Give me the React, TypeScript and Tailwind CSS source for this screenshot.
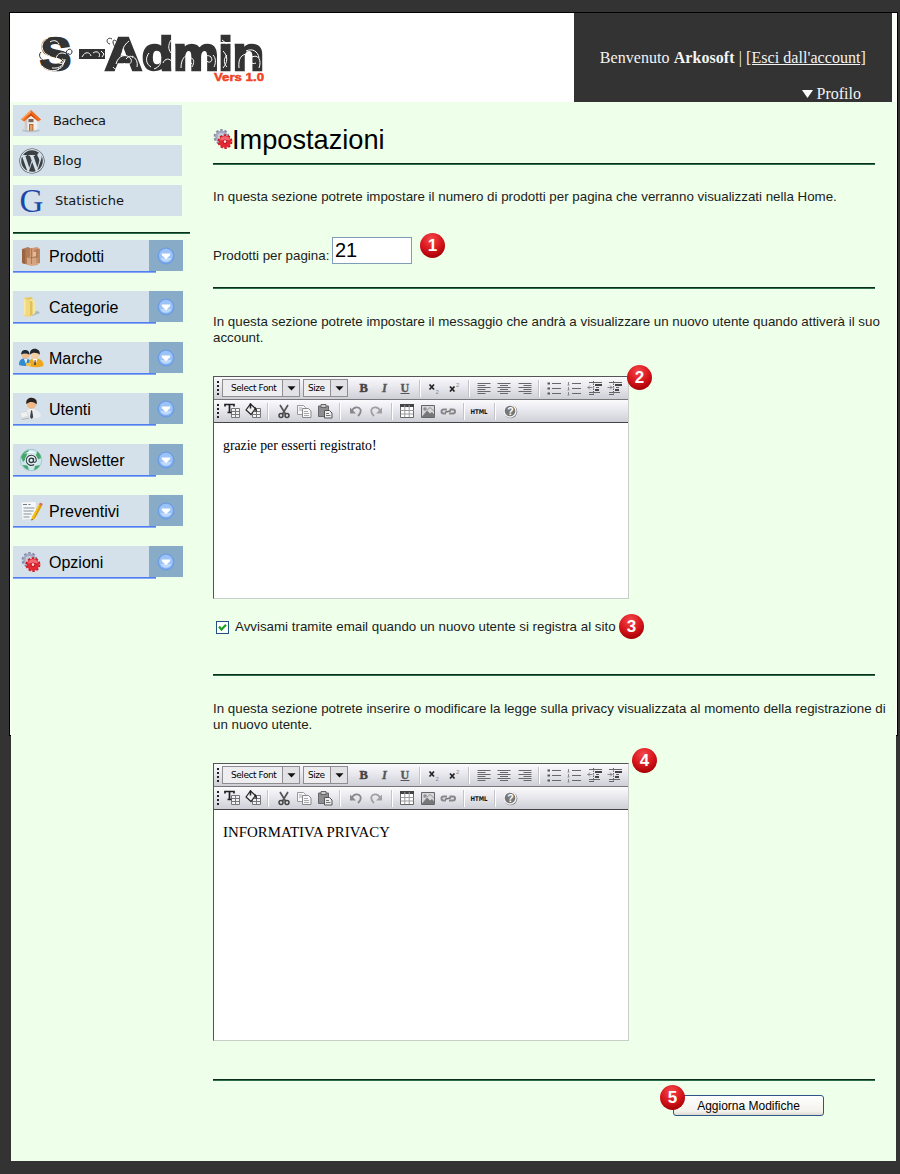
import type { ReactNode } from "react";
import { FaWordpress } from "react-icons/fa";

const SANS = "font-['Liberation_Sans',Arial,sans-serif]";
const SERIF = "font-['Liberation_Serif','Times_New_Roman',serif]";
const VERDANA = "font-['DejaVu_Sans',Verdana,sans-serif]";

function Gear({ size = 20 }: { size?: number }) {
  return (
    <svg width={size} height={size} viewBox="0 0 20 20" className="shrink-0">
      <circle cx="8.5" cy="8" r="6.4" fill="none" stroke="#858aa5" strokeWidth="3" strokeDasharray="2.35 1.67" />
      <circle cx="8.5" cy="8" r="5.2" fill="#c9ccda" stroke="#a3a8c0" strokeWidth="2.4" />
      <circle cx="12" cy="12.6" r="6.3" fill="none" stroke="#c81a24" strokeWidth="2.2" strokeDasharray="2.3 1.66" />
      <circle cx="12" cy="12.6" r="6.1" fill="#e22832" />
      <path d="M6.800 11.300a5.400 5.400 0 0 1 10.400-.3q-5 .1-10.400.3z" fill="#f2676f" />
      <circle cx="12" cy="12.600" r="2.200" fill="#b8141c" />
      <circle cx="12" cy="12.600" r="1.300" fill="#f5e3e6" />
    </svg>
  );
}

function HomeIcon() {
  return (
    <svg width="22" height="24" viewBox="0 0 22 24">
      <ellipse cx="11" cy="21.5" rx="9" ry="1.8" fill="#b9c3cb" />
      <path d="M4.5 10v10.5l7 1.5 6-1.5V10L11 5z" fill="#f1efee" />
      <path d="M4.5 11v9.5l3 .8V10z" fill="#cfc9c6" />
      <path d="M11 1 .8 10.4l3.6 2L11 6.6l6.8 5.8 3.4-1.6z" fill="#ee6a1e" />
      <path d="M11 1 .8 10.4l1.6.7L11 3.2z" fill="#f9a25d" />
      <path d="M11 4.5l-6 6 6-3.8 6 4.4z" fill="#c9480b" />
      <rect x="8.5" y="10" width="5" height="3.2" fill="#7d6257" />
      <rect x="9" y="15" width="4.4" height="6.8" fill="#b36b35" />
      <rect x="10" y="16" width="2.4" height="5.6" fill="#e0a268" />
    </svg>
  );
}

function BoxIcon() {
  return (
    <svg width="20" height="20" viewBox="0 0 20 20">
      <path d="M1 3l6-2 3 1.5V18l-3 .8L1 17z" fill="#b27a55" />
      <path d="M1 3l3 .8V18l-3-1z" fill="#9a6443" />
      <path d="M9 2.5L16 1l3 2v14l-6 1.5-4-1z" fill="#cf9a74" />
      <path d="M13 3.5l6-.5v14l-6 1.5z" fill="#bd855f" />
      <path d="M6 11l6-1 5 .8V19l-7 1-4-1.6z" fill="#d6a480" />
      <path d="M10.5 2.4V18M4 3.8v13M16 3v14M6 11l5 .8 6-1" stroke="#9a6a4a" strokeWidth=".7" fill="none" />
      <path d="M12 6h3v4h-3z" fill="#e2bb9c" />
    </svg>
  );
}

function FolderIcon() {
  return (
    <svg width="20" height="22" viewBox="0 0 20 22">
      <path d="M11 20l8-3-2-2-6 1z" fill="#aab6bf" />
      <path d="M3 2l7-1 1.500 1v17L6 21l-3-2z" fill="#e5c762" />
      <path d="M8.500 3L13.500 4l.8 13-3 2.500z" fill="#f5e6a0" />
      <path d="M3 2l6 2.500V20.500L6 21l-3-2z" fill="#f3d97d" />
      <path d="M9 4.500l2.500 1.200v13L9 20.500z" fill="#e0c05c" />
      <path d="M3.800 3.500v15" stroke="#fbf0bd" strokeWidth="1" />
    </svg>
  );
}

function PeopleIcon() {
  return (
    <svg width="26" height="20" viewBox="0 0 26 20">
      <path d="M1 17c0-5 2-6.500 6-6.500s6 2 6 6.500q-6 2-12 0z" fill="#2f8bd3" />
      <circle cx="7.500" cy="7" r="3.800" fill="#eebd93" />
      <path d="M3.200 6.500C3 2.500 6 1.500 8 2s4 2 3.400 4.800C9 5.500 6 5 3.200 6.500z" fill="#1e2b38" />
      <path d="M6 11l2 5 1.500-5z" fill="#e9f3fb" />
      <path d="M10.500 18c0-6 2-7.500 7-7.500s8 2 8 7.500q-7 2.400-15 0z" fill="#eda81f" />
      <circle cx="16.800" cy="6.800" r="4.400" fill="#f6cfa5" />
      <path d="M12 6.500C11.500 2 14.500.6 17 .7s5.500 2 4.700 6C19 4.500 15 4 12 6.500z" fill="#25272b" />
      <path d="M14.500 11l3 5.500 2-5.500z" fill="#fff" />
      <path d="M16.700 12l-.8 5h2.200l-.6-5z" fill="#564a3a" />
      <rect x="8" y="15" width="5" height="3" rx="1" fill="#f4c24a" />
    </svg>
  );
}

function UserIcon() {
  return (
    <svg width="26" height="23" viewBox="0 0 26 23">
      <path d="M7 21c0-7 2-9 6.500-9s9 3 9.500 7.500q-6 3-16 1.500z" fill="#e9edf1" />
      <path d="M12 12l1.600 9 2-9z" fill="#fff" />
      <path d="M13 13.200l-1 7 1.700 1.800 1.500-1.800-1-7z" fill="#3e444c" />
      <circle cx="13.500" cy="7.200" r="4.700" fill="#efb98a" />
      <path d="M8.300 7C7.500 2.500 11 .7 13.800.8s6 2.200 4.800 6.600C16.500 4.500 12 4 8.300 7z" fill="#2a2321" />
      <path d="M1 15l8-1.500L11 20l-8 2.400z" fill="#d6d9db" />
      <path d="M2.400 16l6-1 1.300 4-6 1.600z" fill="#eef1f3" />
      <path d="M3 22.500l8-2 .8 1L4 23z" fill="#aeb4b9" />
    </svg>
  );
}

function NewsletterIcon() {
  return (
    <svg width="24" height="24" viewBox="0 0 24 24">
      <circle cx="12" cy="12" r="10.800" fill="#c9e7ec" stroke="#9dbfc9" strokeWidth=".8" />
      <path d="M2 9c2-4.500 5-6.500 8-7l-2 4-1 5-3 3zM22 10c0-3-2-5.500-4-6.500l-1 4 2 4zM3.500 17l5 .5 1.500 4.500c-3-.7-5-2.500-6.500-5zM16 18l5-1c-1.500 3-3.500 4.500-6 5.200z" fill="#46a76a" />
      <circle cx="12.300" cy="12.300" r="6.400" fill="#e8f0f1" />
      <circle cx="12.300" cy="12.300" r="2.200" fill="none" stroke="#2c3e44" strokeWidth="1.300" />
      <path d="M14.500 10v3.200c0 1.800 2.800 1.500 2.800-1 0-2.900-2.200-5-5-5a5.100 5.100 0 1 0 2.900 9.300" fill="none" stroke="#2c3e44" strokeWidth="1.100" />
      <path d="M5 6q6-5 13-.5-6-1.600-13 .5z" fill="#fff" opacity=".9" />
    </svg>
  );
}

function NoteIcon() {
  return (
    <svg width="24" height="22" viewBox="0 0 24 22">
      <path d="M2 2l15-.5L18 19 3 20z" fill="#f5f7f8" stroke="#d0d7dc" strokeWidth=".6" />
      <path d="M4 4.500h4M9.500 4.500h2" stroke="#6d7c86" strokeWidth="1.200" />
      <path d="M4.500 8h11M4.500 11h10M4.500 14h8M4.500 17h6" stroke="#87939b" strokeWidth="1.200" />
      <path d="M19.800 4.500l3 1.500-7 12.800-3.300 1.800.3-3.600z" fill="#f2c11d" />
      <path d="M21 5l1.800 1-7 12.800-1.500.6z" fill="#d99c12" />
      <path d="M19.800 4.500l1.200-1.700q2.500 0 2.700 1.600l-.9 1.600z" fill="#e06a4d" />
      <path d="M12.500 20.600l.2-1.800 1.300.9z" fill="#333" />
    </svg>
  );
}

function NavTop({ icon, label, pad, text = "" }: { icon: ReactNode; label: string; pad: string; text?: string }) {
  return (
    <a className={`flex h-[31px] w-[169px] items-center bg-[#d5e1ea] ${VERDANA} text-[13px] text-[#151515]`}>
      <span className={`flex shrink-0 items-center justify-center ${pad}`}>{icon}</span>
      <span className={text}>{label}</span>
    </a>
  );
}

function NavItem({ icon, label }: { icon: ReactNode; label: string }) {
  return (
    <div className="h-[51px]">
      <div className="flex h-[31px] w-[170px]">
        <a className={`flex w-[136px] items-center bg-[#d5e1ea] ${SANS} text-[16px] text-black`}>
          <span className="flex w-[36px] shrink-0 items-center justify-center">{icon}</span>
          <span className="pt-[2px]">{label}</span>
        </a>
        <button className="flex flex-1 items-center justify-center bg-[#88abc8]">
          <svg width="18" height="18" viewBox="0 0 18 18">
            <circle cx="9" cy="9" r="8" fill="#7baaf0" stroke="#6a9ae0" strokeWidth="1" />
            <circle cx="9" cy="8.500" r="6.800" fill="#9cc3f7" />
            <path d="M3.500 11a6 6 0 0 0 11 0z" fill="#bddafb" />
            <path d="M4.600 6.500h8.800l-.6 2L9 12.300 5.200 8.500z" fill="#fff" />
          </svg>
        </button>
      </div>
      <div className="h-[2px] w-[143px] border-b border-[#87a6f3] bg-[#4f7ff0]" />
    </div>
  );
}

function Rule() {
  return <div className="h-[2px] w-[662px] shrink-0 border-b border-[#2c6e4c] bg-[#0c2f1b]" />;
}

function Badge({ n, at }: { n: number; at: string }) {
  return (
    <span
      className={`absolute flex size-[25px] items-center justify-center rounded-full bg-[radial-gradient(circle_at_45%_25%,#f4484b_0%,#d9181e_45%,#a80005_80%,#8c0003_100%)] text-[17px] leading-none font-bold text-white ${SANS} ${at}`}
    >
      {n}
    </span>
  );
}

function Slot({ children }: { children: ReactNode }) {
  return (
    <span className="flex h-full w-[20.5px] shrink-0 items-center justify-center">
      <svg width="18" height="18" viewBox="0 0 18 18">
        {children}
      </svg>
    </span>
  );
}

function Sep({ wide = false }: { wide?: boolean }) {
  return (
    <span className={`flex h-full shrink-0 items-center justify-center ${wide ? "w-[10.5px]" : "w-[8.5px]"}`}>
      <span className="h-[17px] w-[2px] border-l border-[#c3c3ca] bg-white" />
    </span>
  );
}

function Dots() {
  return (
    <svg width="8" height="22" viewBox="0 0 8 22" className="shrink-0">
      <path d="M3 5h2M3 9h2M3 13h2M3 17h2" stroke="#222" strokeWidth="2" />
    </svg>
  );
}

function Picker({ label, box, text }: { label: string; box: string; text: string }) {
  return (
    <span className={`flex h-[18px] shrink-0 border border-[#8f8f92] bg-[#eeeef1] ${box}`}>
      <span className={`flex flex-1 items-center ${VERDANA} text-[9px] whitespace-nowrap text-black ${text}`}>{label}</span>
      <span className="flex w-[17px] items-center justify-center border-l border-[#8f8f92] bg-[#e2e2e6]">
        <svg width="9" height="5" viewBox="0 0 9 5">
          <path d="M.5.300h8L4.500 4.500z" fill="#111" />
        </svg>
      </span>
    </span>
  );
}

const smallGrid = (
  <>
    <path d="M8.500 6.500h8v9h-8z" fill="#f3f3f5" stroke="#77777a" />
    <path d="M8.500 9.500h8M8.500 12.500h8M12.500 6.500v9" stroke="#77777a" />
  </>
);

function Editor({ children, height, textClass }: { children: ReactNode; height: string; textClass: string }) {
  const bar = "flex h-[23px] items-center border-b bg-[linear-gradient(#fbfbfd_0%,#e8e8ee_45%,#cfcfd7_100%)]";
  return (
    <div className={`flex w-[416px] shrink-0 flex-col border border-t-[#555] border-r-[#c9cfc8] border-b-[#c9cfc8] border-l-[#555] bg-white ${height}`}>
      <div className={`${bar} border-b-[#77777b]`}>
        <Dots />
        <Picker label="Select Font" box="w-[78px]" text="pl-[8px] tracking-[-0.45px]" />
        <span className="w-[3px] shrink-0" />
        <Picker label="Size" box="w-[45px]" text="pl-[4px] tracking-[-0.5px]" />
        <span className="w-[6px] shrink-0" />
        <Slot>
          <text x="4.500" y="13" fontSize="12.500" fontWeight="700" fill="#444" fontFamily="Liberation Serif, serif" stroke="#444" strokeWidth=".5">B</text>
        </Slot>
        <Slot>
          <text x="6" y="13" fontSize="12.500" fontWeight="700" fontStyle="italic" fill="#555" stroke="#555" strokeWidth=".3" fontFamily="Liberation Serif, serif">I</text>
        </Slot>
        <Slot>
          <text x="4.500" y="12.500" fontSize="12" fontWeight="700" fill="#555" stroke="#555" strokeWidth=".3" fontFamily="Liberation Serif, serif">U</text>
          <path d="M4.500 14.500h9" stroke="#555" />
        </Slot>
        <Sep />
        <Slot>
          <path d="M4.500 5.500l4.500 5M9 5.500l-4.500 5" stroke="#222" strokeWidth="1.700" />
          <text x="10.500" y="14.500" fontSize="6" fill="#888" fontFamily="Liberation Sans, sans-serif">2</text>
        </Slot>
        <Slot>
          <path d="M4 7.500l4.500 5M8.500 7.500L4 12.500" stroke="#222" strokeWidth="1.700" />
          <text x="10" y="7.500" fontSize="6" fill="#888" fontFamily="Liberation Sans, sans-serif">2</text>
        </Slot>
        <Sep />
        <Slot>
          <path d="M2.500 4.500h13M2.500 6.500h8M2.500 8.500h13M2.500 10.500h8M2.500 12.500h13M2.500 14.500h8" stroke="#68686b" />
        </Slot>
        <Slot>
          <path d="M2.500 4.500h13M5 6.500h8M2.500 8.500h13M5 10.500h8M2.500 12.500h13M5 14.500h8" stroke="#68686b" />
        </Slot>
        <Slot>
          <path d="M2.500 4.500h13M7.500 6.500h8M2.500 8.500h13M7.500 10.500h8M2.500 12.500h13M7.500 14.500h8" stroke="#68686b" />
        </Slot>
        <Sep />
        <Slot>
          <path d="M7 4.500h9M7 9.500h9M7 14.500h9" stroke="#68686b" />
          <path d="M2.500 4.500h2.500M2.500 9.500h2.500M2.500 14.500h2.500" stroke="#555" strokeWidth="2" />
        </Slot>
        <Slot>
          <path d="M7 4.500h9M7 9.500h9M7 14.500h9" stroke="#68686b" />
          <path d="M3.500 3v3M3.500 8v3M3.500 13v3M2.500 6h2M2.500 11h2M2.500 16h2" stroke="#8a8a8d" />
        </Slot>
        <Slot>
          <path d="M3 3.500h13M10 8.500h3M3 13.500h11M3 15.500h4" stroke="#666" />
          <path d="M9 6h7M9 11h4" stroke="#444" strokeWidth="2" />
          <path d="M1.500 8.500h5M4 6.500l-2 2 2 2" stroke="#888" fill="none" />
          <path d="M7.500 2v15" stroke="#666" strokeDasharray="1.500 1" />
        </Slot>
        <Slot>
          <path d="M3 3.500h13M10 8.500h3M3 13.500h11M3 15.500h4" stroke="#666" />
          <path d="M9 6h7M9 11h4" stroke="#444" strokeWidth="2" />
          <path d="M1.500 8.500h5M4 6.500l2 2-2 2" stroke="#888" fill="none" />
          <path d="M7.500 2v15" stroke="#666" strokeDasharray="1.500 1" />
        </Slot>
      </div>
      <div className={`${bar} border-b-[#444]`}>
        <Dots />
        <Slot>
          {smallGrid}
          <path d="M2 4.500V2.500h9v2M6.500 2.500v8M4.500 10.500h4" stroke="#222" strokeWidth="1.700" fill="none" />
        </Slot>
        <Slot>
          {smallGrid}
          <path d="M2 8l4.500-6 5 4.500-4.500 6z" fill="#eee" stroke="#222" strokeWidth="1.200" />
          <path d="M6.500 1.500v5M11 5.500l1.500 4" stroke="#222" strokeWidth="1.500" />
        </Slot>
        <Sep wide />
        <Slot>
          <path d="M5 3l5.500 9M13 3l-5.500 9" stroke="#555" strokeWidth="1.700" />
          <circle cx="6" cy="13.500" r="2" fill="none" stroke="#444" strokeWidth="1.500" />
          <circle cx="12" cy="13.500" r="2" fill="none" stroke="#444" strokeWidth="1.500" />
        </Slot>
        <Slot>
          <path d="M2.500 3.500h6l2 2v7h-8z" fill="#f7f7f9" stroke="#99999c" />
          <path d="M7.500 6.500h6l2.500 2.500v6.500H7.500z" fill="#f7f7f9" stroke="#88888b" />
          <path d="M9 9.500h4M9 11.500h5M9 13.500h5M4 6h3M4 8h3" stroke="#aaaaad" />
        </Slot>
        <Slot>
          <path d="M2.500 4h10v10.500h-10z" fill="#8d8d90" stroke="#68686b" />
          <path d="M5 2.500h5v3H5z" fill="#ccc" stroke="#666" />
          <path d="M8.500 8.500h5l2.500 2.500v5H8.500z" fill="#ededf0" stroke="#555" />
          <path d="M10 11.500h3M10 13.500h4.500" stroke="#777" />
        </Slot>
        <Sep wide />
        <Slot>
          <path d="M5 9c1-4 7-5 8.500-1.500.8 2.500-.5 4.500-2.500 6.500" fill="none" stroke="#89898c" strokeWidth="1.800" />
          <path d="M3 5.500v6h6z" fill="#89898c" />
        </Slot>
        <Slot>
          <path d="M13 9c-1-4-7-5-8.500-1.500-.8 2.500.5 4.500 2.500 6.500" fill="none" stroke="#a0a0a3" strokeWidth="1.800" />
          <path d="M15 5.500v6H9z" fill="#a0a0a3" />
        </Slot>
        <Sep wide />
        <Slot>
          <path d="M2.500 2.500h13v13h-13z" fill="#fff" stroke="#666" />
          <path d="M2 3.500h14" stroke="#444" strokeWidth="3" />
          <path d="M2.500 8.500h13M2.500 12h13M6.800 3v12M11.200 3v12" stroke="#9a9a9d" />
        </Slot>
        <Slot>
          <path d="M2.500 3.500h13v12h-13z" fill="#d6d6da" stroke="#666" />
          <path d="M3 14.500l5-6 3 3 2-1.500 2.500 3v2H3z" fill="#77777a" />
          <circle cx="6" cy="7" r="1.700" fill="#8d8d90" />
          <path d="M8 8l3-2.500L15 9" stroke="#99999c" fill="none" />
        </Slot>
        <Slot>
          <path d="M8 7.500H4.500a2 2 0 0 0 0 4H7M10.500 7.500H14a2 2 0 0 1 0 4h-4" fill="none" stroke="#88888b" strokeWidth="2" />
          <path d="M6 10.300l6-1.600" stroke="#77777a" strokeWidth="1.700" />
        </Slot>
        <Sep wide />
        <Slot>
          <text x=".5" y="11.800" fontSize="6.600" fontWeight="700" fill="#111" fontFamily="DejaVu Sans, sans-serif" textLength="17" lengthAdjust="spacingAndGlyphs">HTML</text>
        </Slot>
        <Sep wide />
        <Slot>
          <circle cx="9.500" cy="9.500" r="6.800" fill="#77777a" />
          <circle cx="9" cy="9" r="6" fill="#77777a" stroke="#f4f4f6" strokeWidth="1.400" />
          <text x="6.200" y="13" fontSize="10.500" fontWeight="700" fill="#fff" fontFamily="Liberation Sans, sans-serif">?</text>
        </Slot>
      </div>
      <div className={`px-[9px] ${SERIF} text-black ${textClass}`}>{children}</div>
    </div>
  );
}

function Logo() {
  return (
    <svg width="240" height="60" viewBox="0 0 240 60" role="img">
      <g fill="#333" stroke="#333" strokeWidth="2.600" fontFamily="Liberation Sans, Arial, sans-serif" fontWeight="700" fontSize="47">
        <text x="12" y="40.500" textLength="31" lengthAdjust="spacingAndGlyphs">S</text>
        <text x="77" y="40.500" textLength="159" lengthAdjust="spacingAndGlyphs">Admin</text>
      </g>
      <path d="M51 20h26v10H51z" fill="#333" />
      <g fill="none" stroke="#fff" strokeWidth="1">
        <path d="M20 9c-9 5-7 15 2 18M38 25c-8-4-13 5-7 9 5 2 7-3 3-4M24 39c8 1 13-4 13-9M14 37c5 5 12 6 17 3M31 15c-2-4-6-4-9-2M33 31c4 3 2 8-3 9" />
        <path d="M54 28c3-6 8-5 9-1M65 24c4-3 8 0 6 4M73 22l3 3-2 3" />
        <path d="M88 35c2-9 11-11 15-5 2 5-5 8-7 4M101 12c-5 4-7 8-6 13M104 27c4 2 6 6 5 11M85 38c2 3 6 3 8 1M98 30c3-4 6-3 7-1" />
        <path d="M121 24c-4 5-3 11 2 14M126 40c6-2 8-7 6-11M143 11c-3 5-3 9 0 13M135 34c2-5 7-5 9-1" />
        <path d="M153 39c0-9 4-14 10-13M164 38c4-7 0-11-4-8-3 4 1 7 4 4M176 38c-2-9 2-14 7-10 3 5-3 7-5 3M185 26c3 3 3 8 1 12" />
        <path d="M194 11l5 4M195 22c5 5 5 11 0 17M199 26c-4 4-3 9 0 12" />
        <path d="M211 39c-1-9 2-14 9-14M231 39c3-8-1-14-7-11-4 4 0 8 4 6M218 22c6-3 12 0 13 7" />
      </g>
      <g fill="none" stroke="#333" strokeWidth="1">
        <path d="M38 24c1-5 6-5 6-1 0 3-4 3-4 1M84 10c-5-3-7 4-2 5M13 23c-4 4 1 9 6 10M88 12c-5-4-3 7 1 6" />
      </g>
      <text x="186" y="52" fill="#f0441f" stroke="#f0441f" strokeWidth=".5" fontSize="11.800" fontWeight="700" fontFamily="Liberation Sans, Arial, sans-serif" textLength="50" lengthAdjust="spacingAndGlyphs">Vers 1.0</text>
    </svg>
  );
}

export default function App() {
  return (
    <div className="grid h-[1174px] w-[900px] grid-cols-[900px] content-start bg-[#333] pt-[12px]">
      <div className="col-start-1 row-start-1 ml-[9px] h-[724px] w-[889px] border border-black bg-[#fafff7]" />
      <div className="col-start-1 row-start-1 mr-[4px] ml-[11px] flex h-[1149px] flex-col pt-[1px]">
        <header className="flex h-[89px] shrink-0">
          <div className="w-[563px] bg-white pt-[16px] pl-[17px]">
            <Logo />
          </div>
          <div className={`flex w-[318px] flex-col items-end bg-[#333] ${SERIF} text-[16px] text-[#f4f4f4]`}>
            <p className="mt-[35px] mr-[26px] leading-[20px] tracking-[0.06px] whitespace-nowrap">
              Benvenuto <b>Arkosoft</b> | <a className="underline">[Esci dall'account]</a>
            </p>
            <a className="mt-[16px] mr-[31px] flex items-center gap-[4px] leading-[19px]">
              <svg width="11" height="8" viewBox="0 0 11 8">
                <path d="M0 0h11L5.500 8z" fill="#fff" />
              </svg>
              Profilo
            </a>
          </div>
          <div className="flex-1 bg-[#fafff7]" />
        </header>
        <div className="flex flex-1 bg-[#eeffea]">
          <nav className="flex w-[202px] shrink-0 flex-col pt-[3px] pl-[2px]">
            <div className="flex flex-col gap-[9px]">
              <NavTop icon={<HomeIcon />} label="Bacheca" pad="w-[35px] mr-[5px]" text="tracking-[-0.4px]" />
              <NavTop icon={<FaWordpress size={26} color="#3c4043" />} label="Blog" pad="w-[37px] mr-[3px]" />
              <NavTop
                icon={<span className="font-['Liberation_Serif',serif] text-[33px] leading-[28px] text-[#1c46a8]">G</span>}
                label="Statistiche"
                pad="w-[37px] mr-[5px]"
              />
            </div>
            <div className="mt-[16px] mb-[6px] h-[2px] w-[177px] border-b border-[#2c6e4c] bg-[#0c2f1b]" />
            <NavItem icon={<BoxIcon />} label="Prodotti" />
            <NavItem icon={<FolderIcon />} label="Categorie" />
            <NavItem icon={<PeopleIcon />} label="Marche" />
            <NavItem icon={<UserIcon />} label="Utenti" />
            <NavItem icon={<NewsletterIcon />} label="Newsletter" />
            <NavItem icon={<NoteIcon />} label="Preventivi" />
            <NavItem icon={<Gear size={20} />} label="Opzioni" />
          </nav>
          <main className={`flex flex-1 flex-col whitespace-nowrap ${SANS} text-[13.330px] leading-[16px] text-[#1c1c1c]`}>
            <div className="flex h-[61px] shrink-0 items-start pt-[21px]">
              <span className="pt-[6px]">
                <Gear size={20} />
              </span>
              <h1 className="-ml-[1px] text-[27.200px] leading-[34px] text-black">Impostazioni</h1>
            </div>
            <Rule />
            <p className="mt-[24px]">
              In questa sezione potrete impostare il numero di prodotti per pagina che verranno visualizzati nella Home.
            </p>
            <div className="relative mt-[32px] flex h-[27px] shrink-0">
              <label className="w-[119px] pt-[11px]">Prodotti per pagina:</label>
              <input
                defaultValue="21"
                className="h-[27px] w-[80px] border border-[#7f9db9] bg-white px-[2px] text-[20px] leading-[24px] text-black"
              />
              <Badge n={1} at="left-[207px] -top-[4px]" />
            </div>
            <div className="h-[23px] shrink-0" />
            <Rule />
            <p className="mt-[25px] mb-[30px]">
              In questa sezione potrete impostare il messaggio che andrà a visualizzare un nuovo utente quando attiverà il suo
              <br />
              account.
            </p>
            <div className="relative">
              <Editor height="h-[223px]" textClass="pt-[15px] text-[13.800px] leading-[16px]">
                grazie per esserti registrato!
              </Editor>
              <Badge n={2} at="left-[414px] -top-[11px]" />
            </div>
            <label className="relative mt-[19px] flex h-[18px] shrink-0 items-center pl-[3px]">
              <span className="mr-[6px] flex size-[13px] items-center justify-center border border-[#1d5281] bg-white">
                <svg width="9" height="9" viewBox="0 0 9 9">
                  <path d="M1 3.500l2.500 3L8 1.800" fill="none" stroke="#21a121" strokeWidth="2.200" />
                </svg>
              </span>
              Avvisami tramite email quando un nuovo utente si registra al sito
              <Badge n={3} at="left-[406px] -top-[4px]" />
            </label>
            <div className="h-[38px] shrink-0" />
            <Rule />
            <p className="mt-[25px] mb-[30px]">
              In questa sezione potrete inserire o modificare la legge sulla privacy visualizzata al momento della registrazione di
              <br />
              un nuovo utente.
            </p>
            <div className="relative">
              <Editor height="h-[278px]" textClass="pt-[14px] text-[14.900px] leading-[17px]">
                INFORMATIVA PRIVACY
              </Editor>
              <Badge n={4} at="left-[419px] -top-[15px]" />
            </div>
            <div className="h-[38px] shrink-0" />
            <Rule />
            <div className="relative mt-[14px] ml-[460px] w-[151px]">
              <button className="flex h-[21px] w-[151px] items-center justify-center rounded-[3px] border border-[#2f5688] bg-[linear-gradient(#ffffff,#f3f2ec_80%,#dddad0)] text-[12px] text-black">
                Aggiorna Modifiche
              </button>
              <Badge n={5} at="-left-[13px] -top-[10px]" />
            </div>
          </main>
        </div>
      </div>
    </div>
  );
}
